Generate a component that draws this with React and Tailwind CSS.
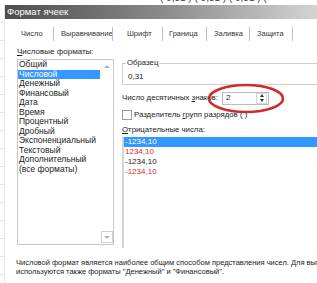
import React from 'react';

const formats = [
  'Общий',
  'Числовой',
  'Денежный',
  'Финансовый',
  'Дата',
  'Время',
  'Процентный',
  'Дробный',
  'Экспоненциальный',
  'Текстовый',
  'Дополнительный',
  '(все форматы)',
];

const negatives = [
  { text: '-1234,10', cls: 'bg-[#3399ff] text-white' },
  { text: '1234,10', cls: 'text-[#e0282a]' },
  { text: '-1234,10', cls: 'text-[#222]' },
  { text: '-1234,10', cls: 'text-[#e0282a]' },
];

const Sep = ({ className }) => <span className={'h-[14px] w-px shrink-0 bg-[#bdbdbd] ' + className} />;

const App = () => {
  return (
    <div className="relative w-[317px] h-[283px] overflow-hidden bg-white text-[#333] font-['Liberation_Sans',Arial,sans-serif]">
      {/* spreadsheet text peeking from above */}
      <div className="h-[5px] overflow-hidden pl-[160px]">
        <div className="-mt-[7px] text-[10px] leading-[10px] text-[#444] whitespace-nowrap">
          ( 0,31 ) ( 0,31 ) ( 0,31 ) (
        </div>
      </div>

      <div className="flex">
        {/* grid lines of the sheet behind */}
        <div className="w-[5px] shrink-0 flex flex-col border-r border-[#e6e6e6]">
          {Array.from({ length: 16 }).map((_, i) => (
            <div key={i} className="h-[18px] border-b border-[#e4e4e4]" />
          ))}
        </div>

        <div className="flex-1 min-w-0">
          {/* Title bar */}
          <div className="h-[14px] flex items-center pl-[2px] bg-gradient-to-r from-[#4d4d4d] via-[#8a8a8a] to-[#d4d4d4]">
            <span className="text-[9.5px] leading-none text-white">Формат ячеек</span>
          </div>

          {/* Tabs */}
          <div className="h-[25px] pt-[4px] flex items-center text-[7.5px] text-[#333] whitespace-nowrap">
            <span className="ml-[16px] w-[21px] shrink-0">Число</span>
            <Sep className="ml-[11px]" />
            <span className="ml-[7px] w-[49px] shrink-0">Выравнивание</span>
            <Sep className="ml-[2px]" />
            <span className="ml-[14px] w-[25px] shrink-0">Шрифт</span>
            <Sep className="ml-[10px]" />
            <span className="ml-[6px] w-[30px] shrink-0">Граница</span>
            <Sep className="ml-[7px]" />
            <span className="ml-[7px] w-[30px] shrink-0">Заливка</span>
            <Sep className="ml-[5px]" />
            <span className="ml-[7px] w-[27px] shrink-0">Защита</span>
            <Sep className="ml-[8px]" />
          </div>

          <div className="flex">
            {/* Left: format categories */}
            <div className="ml-[12px] w-[97px] shrink-0">
              <div className="mt-[3px] h-[10px] leading-[10px] text-[8px] text-[#222] whitespace-nowrap">
                <span className="underline">Ч</span>исловые форматы:
              </div>
              <div className="mt-[2px] h-[186px] border border-[#c8c8c8] flex">
                <div className="flex-1 min-w-0 text-[8.5px] text-[#222]">
                  {formats.map((f, i) => (
                    <div
                      key={f}
                      className={
                        'h-[9.5px] leading-[9.5px] pl-[1px] whitespace-nowrap ' +
                        (i === 1 ? 'bg-[#3399ff] text-white' : '')
                      }
                    >
                      {f}
                    </div>
                  ))}
                </div>
                <div className="w-[13px] flex flex-col justify-between items-center py-[1px]">
                  <div className="w-[11px] h-[10px] flex items-center justify-center">
                    <div className="w-0 h-0 border-l-[3px] border-r-[3px] border-b-[3px] border-l-transparent border-r-transparent border-b-[#b5b5b5]" />
                  </div>
                  <div className="w-[12px] h-[12px] border border-[#cfcfcf] flex items-center justify-center">
                    <div className="w-0 h-0 border-l-[3px] border-r-[3px] border-t-[3px] border-l-transparent border-r-transparent border-t-[#b5b5b5]" />
                  </div>
                </div>
              </div>
            </div>

            {/* Right: options */}
            <div className="ml-[8px] flex-1 min-w-0 text-[7.8px] text-[#222]">
              {/* Sample group */}
              <div className="mt-[19px] relative h-[22px] border border-r-0 border-[#d0d0d0]">
                <span className="absolute -top-[6px] left-[3px] bg-white px-[1px] leading-[10px]">Образец</span>
                <div className="pl-[5px] pt-[8px] leading-[10px] text-[8px]">0,31</div>
              </div>

              <div className="mt-[6px] h-[14px] flex items-center">
                <span className="w-[100px] shrink-0 whitespace-nowrap">
                  Число десятичных <span className="underline">з</span>наков:
                </span>
                <div className="w-[47px] h-[13px] border border-[#bcbcbc] flex items-center">
                  <span className="pl-[3px] flex-1 text-[8px]">2</span>
                  <div className="w-[11px] h-[11px] flex flex-col items-center justify-center gap-[2px] border border-[#d6d6d6] mr-[1px]">
                    <div className="w-0 h-0 border-l-[2.5px] border-r-[2.5px] border-b-[3px] border-l-transparent border-r-transparent border-b-[#333]" />
                    <div className="w-0 h-0 border-l-[2.5px] border-r-[2.5px] border-t-[3px] border-l-transparent border-r-transparent border-t-[#333]" />
                  </div>
                </div>
              </div>

              <div className="mt-[5px] h-[10px] flex items-center">
                <div className="w-[10px] h-[10px] shrink-0 border border-[#9a9a9a] bg-white" />
                <span className="ml-[2px] leading-[10px] whitespace-nowrap">
                  Разделитель <span className="underline">г</span>рупп разрядов ( )
                </span>
              </div>

              <div className="mt-[5px] h-[10px] leading-[10px] whitespace-nowrap">
                <span className="underline">О</span>трицательные числа:
              </div>

              <div className="mt-[2px] h-[111px] border-l-2 border-[#d4d4d4] text-[8px]">
                {negatives.map((n, i) => (
                  <div key={i} className={'h-[10px] leading-[10px] pl-[1px] ' + n.cls}>
                    {n.text}
                  </div>
                ))}
              </div>
            </div>
          </div>

          {/* Description */}
          <div className="mt-[10px] ml-[11px] text-[7.5px] leading-[9px] text-[#222] whitespace-nowrap">
            <div>Числовой формат является наиболее общим способом представления чисел. Для вывода</div>
            <div>используются также форматы "Денежный" и "Финансовый".</div>
          </div>
        </div>
      </div>

      {/* Red hand-drawn ellipse over the spin box */}
      <svg className="absolute left-[207px] top-[83px]" width="78" height="31" viewBox="0 0 78 31">
        <ellipse cx="39" cy="15.5" rx="37" ry="13.5" fill="none" stroke="#cf2b2b" strokeWidth="2.6" />
      </svg>
    </div>
  );
};

export default App;
